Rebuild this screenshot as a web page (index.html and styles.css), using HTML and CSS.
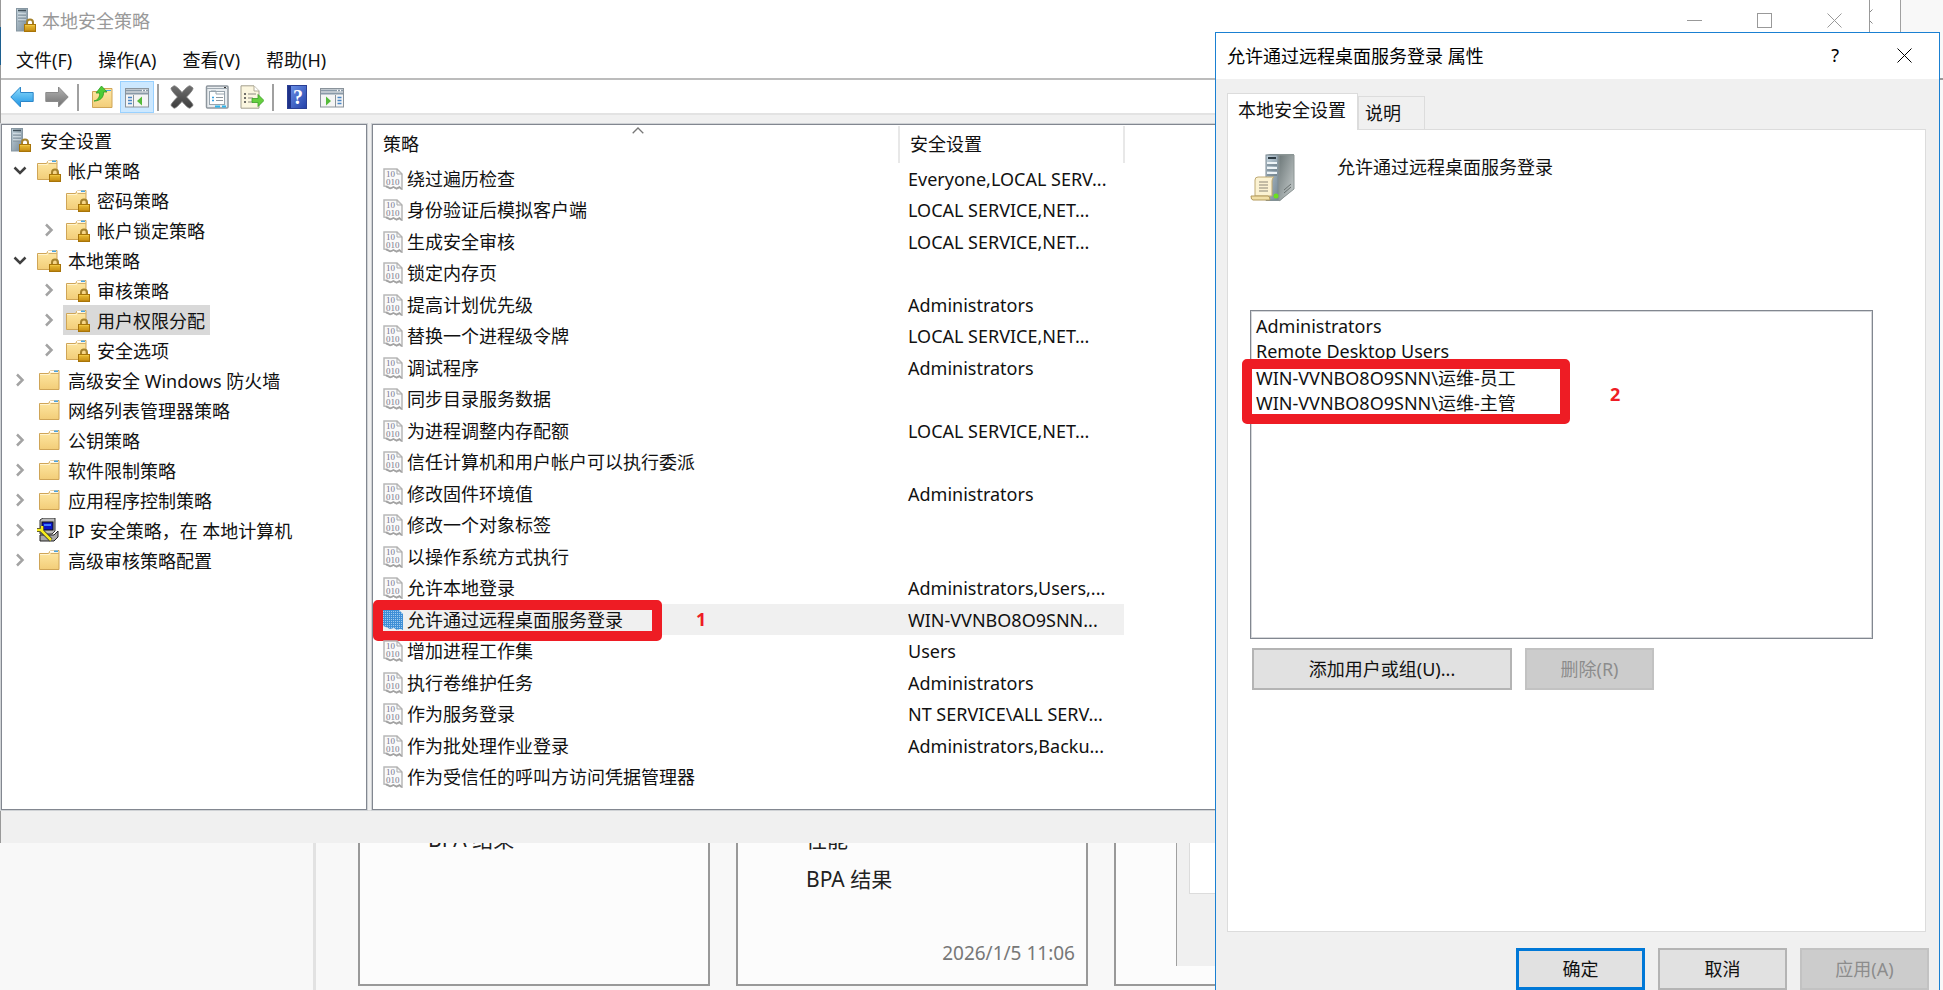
FILE: index.html
```html
<!DOCTYPE html>
<html lang="zh-CN">
<head>
  <meta charset="UTF-8" />
  <meta name="viewport" content="width=device-width, initial-scale=1.0"/>
  <title>本地安全策略</title>
  <link rel="stylesheet" href="styles.css">
</head>
<body>
  <!-- Iconos compartidos -->
  <svg class="sprite" aria-hidden="true">
    <defs>
      <linearGradient id="gFolder" x1="0" y1="0" x2="0" y2="1">
        <stop offset="0" stop-color="#ffe9a6"/><stop offset="1" stop-color="#f2cd78"/>
      </linearGradient>
      <linearGradient id="gLock" x1="0" y1="0" x2="0" y2="1">
        <stop offset="0" stop-color="#f6d04a"/><stop offset="1" stop-color="#b87d08"/>
      </linearGradient>
      <linearGradient id="gServer" x1="0" y1="0" x2="1" y2="1">
        <stop offset="0" stop-color="#c3d3dd"/><stop offset="1" stop-color="#758794"/>
      </linearGradient>
      <linearGradient id="gSide" x1="0" y1="0" x2="1" y2="1">
        <stop offset="0" stop-color="#6d7879"/><stop offset="1" stop-color="#c9cfcf"/>
      </linearGradient>
      <linearGradient id="gBlue" x1="0" y1="0" x2="0" y2="1">
        <stop offset="0" stop-color="#8fdcfb"/><stop offset="1" stop-color="#1b93e4"/>
      </linearGradient>
      <linearGradient id="gGray" x1="0" y1="0" x2="0" y2="1">
        <stop offset="0" stop-color="#b5b5b5"/><stop offset="1" stop-color="#6f6f6f"/>
      </linearGradient>
      <linearGradient id="gDark" x1="0" y1="0" x2="0" y2="1">
        <stop offset="0" stop-color="#707070"/><stop offset="1" stop-color="#3c3c3c"/>
      </linearGradient>
      <linearGradient id="gHelp" x1="0" y1="0" x2="1" y2="1">
        <stop offset="0" stop-color="#6f97ec"/><stop offset="1" stop-color="#2340a8"/>
      </linearGradient>
      <pattern id="pDots" width="2" height="2" patternUnits="userSpaceOnUse">
        <rect width="2" height="2" fill="#3f8fd6"/><rect width="1" height="1" fill="#9fcbf0"/>
      </pattern>
    </defs>
    <symbol id="lock" viewBox="0 0 12 14">
      <path d="M3 7V4.500a3 3 0 0 1 6 0V7" fill="none" stroke="#a5822c" stroke-width="2"/>
      <rect x=".5" y="6.500" width="11" height="7" fill="url(#gLock)" stroke="#a87408"/>
      <path d="M1 9h10M1 11h10" stroke="#d9a520" stroke-width=".8"/>
    </symbol>
    <symbol id="folder" viewBox="0 0 24 24">
      <path d="M2.500 21.500V5.500h9l2-3h8.500v19z" fill="url(#gFolder)" stroke="#cfa557"/>
      <path d="M3 6.500h9.500l2-2.500h7" fill="none" stroke="#fff4cf"/>
      <rect x="13" y="2.500" width="8" height="2" fill="#fff"/>
      <rect x="17" y="2.500" width="4" height="1.500" fill="#4aa3e0"/>
      <path d="M13.500 5.500H22" stroke="#d4b069"/>
    </symbol>
    <symbol id="folder-lock" viewBox="0 0 26 24">
      <use href="#folder" x="-1" width="24" height="24"/>
      <use href="#lock" x="13" y="10" width="12" height="14"/>
    </symbol>
    <symbol id="server-lock" viewBox="0 0 20 24">
      <rect x=".5" y=".5" width="11" height="22.500" fill="url(#gServer)" stroke="#8797a2"/>
      <path d="M2 2.500h8" stroke="#41505a" stroke-width="1.500"/>
      <path d="M2 6h8M2 9h8M2 12h8" stroke="#eef5f9"/>
      <path d="M2 7h8M2 10h8M2 13h8" stroke="#7e8e99"/>
      <use href="#lock" x="8" y="10" width="12" height="14"/>
    </symbol>
    <symbol id="open" viewBox="0 0 14 14">
      <path d="M1.500 4.500L7 10l5.500-5.500" fill="none" stroke="#404040" stroke-width="2.500"/>
    </symbol>
    <symbol id="closed" viewBox="0 0 14 14">
      <path d="M4 1.500L9.500 7 4 12.500" fill="none" stroke="#a3a3a3" stroke-width="2.500"/>
    </symbol>
    <symbol id="close" viewBox="0 0 15 15">
      <path d="M.5.5l14 14M14.500.5l-14 14" stroke="currentColor" fill="none"/>
    </symbol>
  </svg>

  <!-- Administrador del servidor al fondo -->
  <div class="manager">
    <div class="manager-top"></div>
    <div class="manager-body">
      <div class="manager-side"></div>
      <div class="cards">
        <div class="card"><p>BPA 结果</p></div>
        <div class="card card-full">
          <p>性能</p>
          <p>BPA 结果</p>
          <time>2026/1/5 11:06</time>
        </div>
        <div class="card"></div>
      </div>
    </div>
  </div>
  <div class="back-window">
    <svg class="x"><use href="#close"/></svg>
  </div>
  <div class="back-dialog"><div></div></div>

  <main class="window">
    <header class="titlebar">
      <svg width="20" height="24"><use href="#server-lock"/></svg>
      <h1>本地安全策略</h1>
      <div class="controls">
        <button aria-label="最小化"><svg class="x" viewBox="0 0 15 15"><path d="M0 7.500h15" stroke="currentColor"/></svg></button>
        <button aria-label="最大化"><svg class="x" viewBox="0 0 15 15"><rect x=".5" y=".5" width="14" height="14" fill="none" stroke="currentColor"/></svg></button>
        <button aria-label="关闭"><svg class="x"><use href="#close"/></svg></button>
      </div>
    </header>
    <nav class="menu">
      <button>文件(F)</button>
      <button>操作(A)</button>
      <button>查看(V)</button>
      <button>帮助(H)</button>
    </nav>
    <div class="toolbar">
      <button aria-label="后退">
        <svg viewBox="0 0 24 24"><path d="M.8 12L10.500 2v5.500h12.700v9H10.500V22z" fill="url(#gBlue)" stroke="#2c86c9"/></svg>
      </button>
      <button aria-label="前进">
        <svg viewBox="0 0 24 24"><path d="M23.200 12L13.500 2v5.500H.8v9h12.700V22z" fill="url(#gGray)" stroke="#8a8a8a"/></svg>
      </button>
      <span class="sep"></span>
      <button aria-label="上一级">
        <svg viewBox="0 0 24 24"><path d="M2.500 22.500V6.500h9l2-3h8.500v19z" fill="url(#gFolder)" stroke="#cfa557"/><path d="M15 5.500h6" stroke="#4aa3e0"/><path d="M4 16c4-1 6-4 5.500-8H6l5.500-7 5.500 6h-3.500c.5 5-3 9-9.500 9z" fill="#4dcb36" stroke="#2f9d22" stroke-width=".8"/></svg>
      </button>
      <button class="pressed" aria-label="显示/隐藏控制台树">
        <svg viewBox="0 0 24 24"><rect x=".5" y="3.500" width="23" height="18.500" fill="#f5f5f5" stroke="#8a939b"/><path d="M1 5.500h22M1 8.500h22" stroke="#8a9aa8" stroke-width="2"/><path d="M17 5.500h1M20 5.500h1" stroke="#fff" stroke-width="1.500"/><path d="M8.500 10v12" stroke="#8a939b"/><path d="M3 12.500h4M3 15.500h4M3 18.500h4" stroke="#4a86c5" stroke-width="1.500"/><path d="M17 11.500v9L12 16z" fill="#55bb3a"/></svg>
      </button>
      <span class="sep"></span>
      <button aria-label="删除">
        <svg viewBox="0 0 24 24"><path d="M1 3L4 .8Q6 .5 12 7.500Q18 .5 20 .8L23 3Q23.500 5 16.500 12Q23.500 19 23 20.500L20 23.200Q18 23.500 12 16.500Q6 23.500 4 23.200L1 20.500Q.5 19 7.500 12Q.5 5 1 3z" fill="url(#gDark)" stroke="#777" stroke-width=".8"/></svg>
      </button>
      <button aria-label="属性">
        <svg viewBox="0 0 24 24"><rect x="1.500" y="1" width="21.500" height="22" rx="1" fill="#e8ecef" stroke="#8e979e" stroke-width="1.500"/><path d="M2 3.500h20" stroke="#9ea8b0"/><path d="M19 2.500h2" stroke="#333"/><rect x="4.500" y="6.500" width="15" height="13" fill="#fff" stroke="#98a4ad"/><path d="M6 6h5v3h8" fill="none" stroke="#98a4ad"/><path d="M7 12.500h2M7 15.500h2" stroke="#359fe0" stroke-width="1.500"/><path d="M11 12.500h7M11 15.500h7" stroke="#8e979e"/><path d="M10 21.500h5M17 21.500h4" stroke="#2fb4ea" stroke-width="2"/></svg>
      </button>
      <button aria-label="导出列表">
        <svg viewBox="0 0 24 24"><path d="M1 .8h13l5 5v17.400H1z" fill="#fbf6df" stroke="#a39f8d"/><path d="M14 1v5h5" fill="#fff" stroke="#b0ab94"/><path d="M4 9h2M4 13h2M4 17h2" stroke="#444" stroke-width="1.500"/><path d="M8 9h8M8 13h5M8 17h5" stroke="#8c8a80"/><path d="M12 13.500h6v-4l6 6-6 6v-4h-6z" fill="#65cf3e" stroke="#3b9e27" stroke-width=".8"/></svg>
      </button>
      <span class="sep"></span>
      <button aria-label="帮助">
        <svg viewBox="0 0 24 24"><rect x="2.500" y=".5" width="19" height="23" fill="url(#gHelp)" stroke="#2a3f94"/><path d="M4.500 1v22" stroke="#1f3288" stroke-width="3"/><text x="13" y="19" class="help-mark">?</text></svg>
      </button>
      <button aria-label="显示/隐藏操作窗格">
        <svg viewBox="0 0 24 24"><rect x=".5" y="3.500" width="23" height="18.500" fill="#f5f5f5" stroke="#8a939b"/><path d="M1 5.500h22M1 8.500h22" stroke="#8a9aa8" stroke-width="2"/><path d="M17 5.500h1M20 5.500h1" stroke="#fff" stroke-width="1.500"/><path d="M15.500 10v12" stroke="#8a939b"/><path d="M17.500 12.500h4M17.500 15.500h4M17.500 18.500h4" stroke="#4a86c5" stroke-width="1.500"/><path d="M6 11.500v9L11 16z" fill="#55bb3a"/></svg>
      </button>
    </div>

    <div class="panes">
      <ul class="pane tree">
        <li class="root"><button><svg width="20" height="24"><use href="#server-lock"/></svg>安全设置</button></li>
        <li><svg class="arrow"><use href="#open"/></svg><button><svg class="ico"><use href="#folder-lock"/></svg>帐户策略</button></li>
        <li class="sub"><span class="arrow"></span><button><svg class="ico"><use href="#folder-lock"/></svg>密码策略</button></li>
        <li class="sub"><svg class="arrow"><use href="#closed"/></svg><button><svg class="ico"><use href="#folder-lock"/></svg>帐户锁定策略</button></li>
        <li><svg class="arrow"><use href="#open"/></svg><button><svg class="ico"><use href="#folder-lock"/></svg>本地策略</button></li>
        <li class="sub"><svg class="arrow"><use href="#closed"/></svg><button><svg class="ico"><use href="#folder-lock"/></svg>审核策略</button></li>
        <li class="sub"><svg class="arrow"><use href="#closed"/></svg><button class="selected"><svg class="ico"><use href="#folder-lock"/></svg>用户权限分配</button></li>
        <li class="sub"><svg class="arrow"><use href="#closed"/></svg><button><svg class="ico"><use href="#folder-lock"/></svg>安全选项</button></li>
        <li><svg class="arrow"><use href="#closed"/></svg><button><svg class="ico"><use href="#folder"/></svg>高级安全 Windows 防火墙</button></li>
        <li><span class="arrow"></span><button><svg class="ico"><use href="#folder"/></svg>网络列表管理器策略</button></li>
        <li><svg class="arrow"><use href="#closed"/></svg><button><svg class="ico"><use href="#folder"/></svg>公钥策略</button></li>
        <li><svg class="arrow"><use href="#closed"/></svg><button><svg class="ico"><use href="#folder"/></svg>软件限制策略</button></li>
        <li><svg class="arrow"><use href="#closed"/></svg><button><svg class="ico"><use href="#folder"/></svg>应用程序控制策略</button></li>
        <li><svg class="arrow"><use href="#closed"/></svg><button>
          <svg class="ico" viewBox="0 0 26 24"><path d="M4 2l3-2h12v13l-3 3H4z" fill="#b9b9b9" stroke="#333"/><rect x="6" y="4" width="11" height="8" fill="#0b16c4" stroke="#111"/><path d="M8 7h7" stroke="#3f7bff" stroke-width="2"/><path d="M4 17h14l4-4v6l-4 4H4z" fill="#a8a8a8" stroke="#222"/><path d="M1 12h5V8M5 12l10 10" fill="none" stroke="#333" stroke-width="4"/><path d="M1 12h5V8M5 12l10 10" fill="none" stroke="#f7ec1c" stroke-width="2.500"/></svg>IP 安全策略，在 本地计算机</button></li>
        <li><svg class="arrow"><use href="#closed"/></svg><button><svg class="ico"><use href="#folder"/></svg>高级审核策略配置</button></li>
      </ul>

      <div class="pane list">
        <table>
          <thead>
            <tr>
              <th class="col-name">策略<svg class="sort" viewBox="0 0 12 7"><path d="M.7 6.300L6 1l5.300 5.300" fill="none" stroke="#777" stroke-width="1.300"/></svg></th>
              <th class="col-value">安全设置</th>
              <th></th>
            </tr>
          </thead>
          <tbody id="policies"></tbody>
        </table>
      </div>
    </div>
    <footer class="status"></footer>
  </main>

  <section class="dialog">
    <header class="dialog-title">
      <h2>允许通过远程桌面服务登录 属性</h2>
      <button aria-label="帮助">?</button>
      <button aria-label="关闭"><svg class="x"><use href="#close"/></svg></button>
    </header>
    <div class="tabs" role="tablist">
      <button role="tab" class="tab active">本地安全设置</button>
      <button role="tab" class="tab">说明</button>
    </div>
    <div class="tab-panel">
      <div class="policy-head">
        <svg width="46" height="50" viewBox="0 0 46 50">
          <path d="M16 2l4-1h24v34L30 48H16z" fill="#8b9897"/>
          <path d="M29 2h15v34L29 48z" fill="url(#gSide)" stroke="#8b9493"/>
          <rect x="16" y="2" width="12" height="45" fill="url(#gServer)" stroke="#7c8a93"/>
          <path d="M18 5h8" stroke="#2c3a42" stroke-width="2"/>
          <path d="M17 10h10M17 15h10M17 20h10" stroke="#eef4f7" stroke-width="2"/>
          <path d="M17 12h10M17 17h10M17 22h10" stroke="#5f707b"/>
          <path d="M34 40l7-6M34 37l7-6" stroke="#68706f"/>
          <circle cx="26" cy="43" r="2.500" fill="#6be01e"/>
          <path d="M5 27q0-3 3-3h16q-2 1-2 4v15H5z" fill="#fbf2d2" stroke="#bfa973"/>
          <path d="M9 29h9M9 32h9M9 35h9M9 38h9" stroke="#8b8678"/>
          <path d="M1 43h17q2 0 2 4H3q-2 0-2-4z" fill="#f1dfa6" stroke="#b39a5c"/>
        </svg>
        <span id="policyName">允许通过远程桌面服务登录</span>
      </div>
      <div class="members">
        <select multiple size="12" aria-labelledby="policyName">
          <option>Administrators</option>
          <option>Remote Desktop Users</option>
          <option>WIN-VVNBO8O9SNN\运维-员工</option>
          <option>WIN-VVNBO8O9SNN\运维-主管</option>
        </select>
        <div class="mark mark-members"></div>
        <span class="mark-number number-members">2</span>
      </div>
      <div class="member-buttons">
        <button class="btn wide">添加用户或组(U)...</button>
        <button class="btn" disabled>删除(R)</button>
      </div>
    </div>
    <div class="dialog-buttons">
      <button class="btn default">确定</button>
      <button class="btn">取消</button>
      <button class="btn" disabled>应用(A)</button>
    </div>
  </section>

  <script>
    const policies = [
      ["绕过遍历检查", "Everyone,LOCAL SERV..."],
      ["身份验证后模拟客户端", "LOCAL SERVICE,NET..."],
      ["生成安全审核", "LOCAL SERVICE,NET..."],
      ["锁定内存页", ""],
      ["提高计划优先级", "Administrators"],
      ["替换一个进程级令牌", "LOCAL SERVICE,NET..."],
      ["调试程序", "Administrators"],
      ["同步目录服务数据", ""],
      ["为进程调整内存配额", "LOCAL SERVICE,NET..."],
      ["信任计算机和用户帐户可以执行委派", ""],
      ["修改固件环境值", "Administrators"],
      ["修改一个对象标签", ""],
      ["以操作系统方式执行", ""],
      ["允许本地登录", "Administrators,Users,..."],
      ["允许通过远程桌面服务登录", "WIN-VVNBO8O9SNN..."],
      ["增加进程工作集", "Users"],
      ["执行卷维护任务", "Administrators"],
      ["作为服务登录", "NT SERVICE\\ALL SERV..."],
      ["作为批处理作业登录", "Administrators,Backu..."],
      ["作为受信任的呼叫方访问凭据管理器", ""]
    ];
    const selected = 14;

    const binaryIcon = `
      <path d="M1 1h13l5 5v15.500l-2.500-2-3 1.500-3-2-3 1.500-3-2L1 18z" fill="#fafafa" stroke="#b8b8b8" stroke-width="1.500"/>
      <path d="M14 1v5h5" fill="none" stroke="#a8a8a8"/>
      <path d="M3 18.500l4 2 3.500-1.500 3 1.500 3-1.500 2 2" fill="none" stroke="#a2a2a2" stroke-width="1.500"/>
      <text x="3" y="9" class="bits">10</text>
      <text x="3" y="17" class="bits">010</text>`;
    const binaryIconOn = `<path d="M0 0h15l5 5v16l-3-1-3 1-3-2-4 1-4-2-3-1z" fill="url(#pDots)"/>`;

    const tbody = document.getElementById("policies");
    policies.forEach(([name, value], index) => {
      const on = index === selected;
      const tr = document.createElement("tr");
      if (on) tr.className = "selected";
      tr.innerHTML = `
        <td><div class="name"><svg width="20" height="22" viewBox="0 0 20 22">${on ? binaryIconOn : binaryIcon}</svg>${name}</div>
        ${on ? '<div class="mark mark-policy"></div><span class="mark-number number-policy">1</span>' : ""}</td>
        <td>${value}</td>
      `;
      tbody.appendChild(tr);
    });
  </script>
</body>
</html>
```

FILE: styles.css
```css
* {
  box-sizing: border-box;
}

body {
  margin: 0;
  position: relative;
  height: 100vh;
  overflow: hidden;
  background: #f8f8f8;
  color: #111;
  font-family: "Noto Sans", "Noto Sans CJK SC", sans-serif;
  font-size: 18px;
}

button {
  border: none;
  padding: 0;
  background: none;
  color: inherit;
  font: inherit;
}

h1,
h2,
p,
ul {
  margin: 0;
  padding: 0;
  font-size: 18px;
  font-weight: normal;
}

.sprite {
  position: absolute;
  width: 0;
  height: 0;
}

.bits {
  font-family: "Liberation Serif", serif;
  font-size: 9px;
  fill: #77778c;
}

.help-mark {
  font-family: "Liberation Serif", serif;
  font-size: 20px;
  font-weight: bold;
  text-anchor: middle;
  fill: #fff;
}

.x {
  display: block;
  width: 15px;
  height: 15px;
}

/* Fondo */
.manager {
  display: flex;
  flex-direction: column;
  height: 100%;
}

.manager-top {
  flex: 0 0 80px;
  border-bottom: 2px solid #999;
}

.manager-body {
  flex: 1;
  display: flex;
}

.manager-side {
  flex: 0 0 316px;
  border-right: 3px solid #e2e2e2;
}

.cards {
  flex: 1;
  display: grid;
  grid-template-columns: repeat(auto-fill, 352px);
  gap: 26px;
  padding: 0 0 4px 42px;
}

.card {
  position: relative;
  display: flex;
  flex-direction: column;
  padding: 737px 11px 11px 68px;
  border: 2px solid #999;
  background: #fcfcfc;
}

.card p {
  font-size: 21px;
  line-height: 40px;
  color: #222;
}

.card time {
  margin-top: auto;
  align-self: flex-end;
  font-size: 19px;
  line-height: 40px;
  color: #777;
}

.back-window {
  position: absolute;
  top: 0;
  left: 0;
  right: 42px;
  height: 200px;
  display: flex;
  justify-content: flex-end;
  padding: 9px 27px;
  border-right: 1px solid #a0a0a0;
  background: #fff;
  color: #888;
}

.back-dialog {
  position: absolute;
  top: 700px;
  left: 1176px;
  width: 300px;
  height: 266px;
  padding: 20px 12px 72px;
  border-left: 1px solid #a0a0a0;
  background: #f0f0f0;
}

.back-dialog div {
  height: 100%;
  border: 1px solid #dcdcdc;
  background: #fff;
}

/* Ventana principal */
.window {
  position: absolute;
  top: 0;
  left: 0;
  right: 73px;
  border-left: 1px solid #999;
  border-right: 1px solid #999;
  background: #fff;
}

.window::before {
  content: "";
  position: absolute;
  top: 27px;
  left: -1px;
  width: 1px;
  height: 38px;
  background: #1c5f8f;
}

.titlebar {
  display: flex;
  align-items: center;
  height: 40px;
  padding-left: 15px;
  gap: 6px;
  color: #999;
}

.controls {
  display: flex;
  gap: 55px;
  margin-left: auto;
  padding-right: 27px;
}

.menu {
  display: flex;
  gap: 26px;
  height: 40px;
  padding: 0 15px;
  border-bottom: 2px solid #bcbcbc;
}

.toolbar {
  display: flex;
  align-items: flex-end;
  gap: 1px;
  height: 35px;
  padding-left: 4px;
  border-bottom: 2px solid #e3e3e3;
}

.toolbar button {
  display: flex;
  align-items: center;
  justify-content: center;
  width: 34px;
  height: 32px;
  border: 1px solid transparent;
}

.toolbar svg {
  width: 24px;
  height: 24px;
}

.toolbar .pressed {
  border-color: #99d1ff;
  background: #cce8ff;
}

.sep {
  width: 2px;
  height: 27px;
  margin: 0 5px 2px 2px;
  background: #a0a0a0;
}

.panes {
  display: grid;
  grid-template-columns: 366px 1fr;
  gap: 5px;
  padding-top: 9px;
  background: #f0f0f0;
}

.pane {
  border: 1px solid #828790;
  box-shadow: 0 0 0 1px #cfd2d5;
  background: #fff;
}

.tree {
  list-style: none;
}

.tree li {
  display: flex;
  align-items: center;
  height: 30px;
  padding-left: 11px;
}

.tree li.root {
  padding-left: 8px;
}

.tree li.sub {
  padding-left: 40px;
}

.tree button {
  display: flex;
  align-items: center;
  gap: 6px;
  height: 30px;
  padding: 0 5px 0 2px;
  white-space: nowrap;
}

.tree .root button {
  gap: 9px;
  padding-left: 1px;
}

.tree .selected {
  background: #d9d9d9;
}

.arrow {
  width: 14px;
  height: 14px;
  margin-right: 7px;
}

.ico {
  width: 26px;
  height: 24px;
}

.list {
  padding: 1px 0 16px;
}

table {
  width: 100%;
  table-layout: fixed;
  border-collapse: collapse;
}

th {
  position: relative;
  height: 37px;
  padding: 0 9px 4px 10px;
  border-right: 2px solid #e8e8e8;
  text-align: left;
  font-weight: normal;
}

th:last-child {
  border-right: none;
}

.col-name {
  width: 526px;
}

.col-value {
  width: 225px;
}

.sort {
  position: absolute;
  top: 1px;
  left: 259px;
  width: 12px;
  height: 7px;
}

td {
  position: relative;
  height: 31px;
  padding: 0 10px;
  line-height: 30px;
  white-space: nowrap;
}

tr:nth-child(even) td {
  height: 32px;
}

tr.selected td {
  background: #f0f0f0;
}

tr td:last-child {
  padding-left: 9px;
}

.name {
  display: flex;
  align-items: center;
  gap: 4px;
}

.status {
  height: 33px;
  border-top: 1px solid #dcdcdc;
  background: #f0f0f0;
}

/* Marcas rojas */
.mark {
  position: absolute;
  border: 10px solid #ee1c24;
  border-radius: 5px;
  pointer-events: none;
}

.mark-number {
  position: absolute;
  color: #ee1c24;
  font-family: "Open Sans", sans-serif;
  font-weight: bold;
  line-height: 30px;
}

.mark-policy {
  top: -4px;
  left: 0;
  width: 289px;
  height: 41px;
}

.number-policy {
  top: 0;
  left: 323px;
}

.mark-members {
  top: 49px;
  left: -8px;
  width: 328px;
  height: 65px;
}

.number-members {
  top: 69px;
  left: 360px;
}

/* Cuadro de propiedades */
.dialog {
  position: absolute;
  top: 32px;
  bottom: -12px;
  left: 1215px;
  right: 3px;
  display: flex;
  flex-direction: column;
  padding-bottom: 11px;
  border: 1px solid #1a80d2;
  background: #f0f0f0;
}

.dialog-title {
  display: flex;
  align-items: center;
  height: 46px;
  padding: 0 27px 2px 11px;
  background: #fff;
  color: #000;
}

.dialog-title h2 {
  flex: 1;
}

.dialog-title button:last-child {
  margin-left: 58px;
}

.tabs {
  display: flex;
  align-items: flex-end;
  padding: 14px 11px 0;
}

.tab {
  height: 33px;
  padding: 0 23px 2px 6px;
  border: 1px solid #dcdcdc;
  border-bottom: none;
}

.tab.active {
  height: 37px;
  margin-bottom: -1px;
  padding: 0 11px 6px 10px;
  background: #fff;
  z-index: 1;
}

.tab-panel {
  flex: 1;
  margin: 0 13px 0 11px;
  padding: 23px 52px 0 22px;
  border: 1px solid #dcdcdc;
  background: #fff;
}

.policy-head {
  display: flex;
  gap: 41px;
  height: 157px;
  line-height: 28px;
}

.members {
  position: relative;
}

.members select {
  display: block;
  width: 100%;
  height: 329px;
  padding: 3px;
  border: 1px solid #828790;
  border-radius: 0;
  outline: 1px solid #d5d7da;
  outline-offset: -2px;
  background: #fff;
  color: inherit;
  font: inherit;
  overflow: hidden;
}

.members option {
  padding: 0 2px;
  height: 25px;
  min-height: 25px;
  line-height: 25px;
}

.member-buttons {
  display: flex;
  gap: 13px;
  padding: 9px 2px;
}

.btn {
  width: 129px;
  height: 42px;
  padding-bottom: 2px;
  border: 2px solid #b4b4b4;
  background: #e1e1e1;
}

.btn.wide {
  width: 260px;
}

.btn.default {
  border: 3px solid #0078d7;
}

.btn:disabled {
  border-color: #c2c2c2;
  background: #ccc;
  color: #8c8c8c;
}

.dialog-buttons {
  display: flex;
  justify-content: flex-end;
  gap: 13px;
  padding: 16px 10px 0;
}
```
